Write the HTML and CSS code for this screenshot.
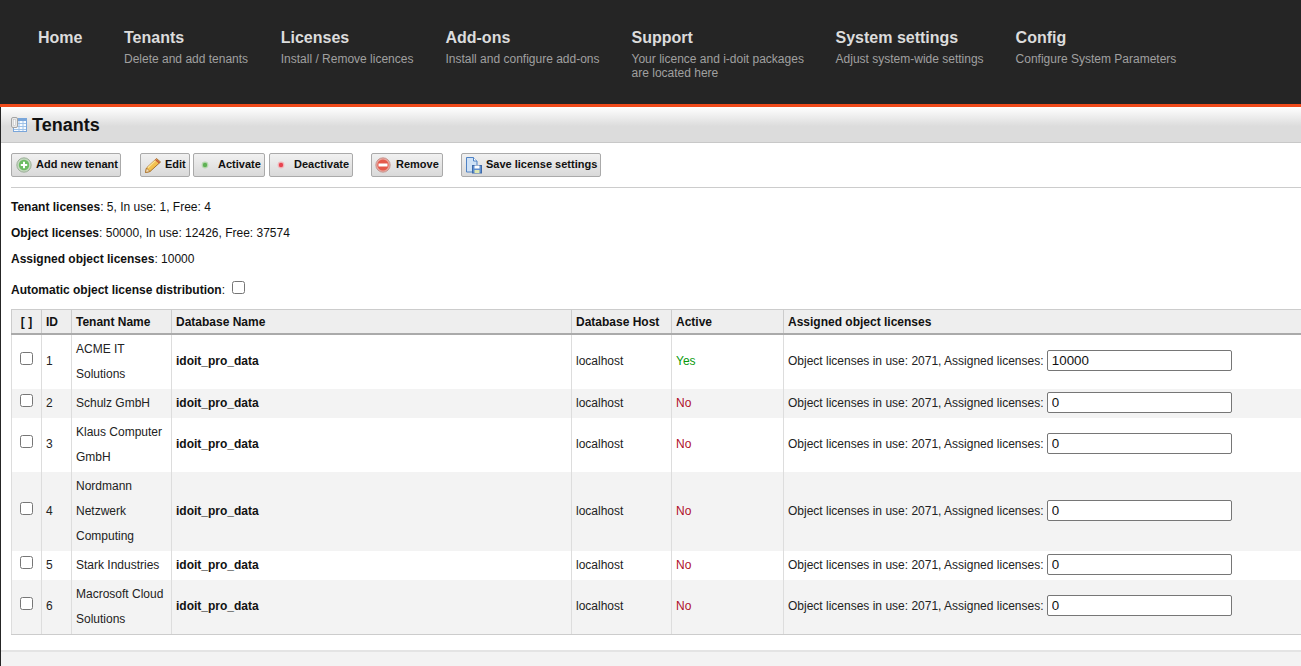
FILE: index.html
```html
<!DOCTYPE html>
<html lang="en">
<head>
<meta charset="utf-8">
<title>Tenants</title>
<link rel="stylesheet" href="styles.css">
</head>
<body>
<header class="topnav">
  <div class="nav-item nav-home"><div class="nav-title">Home</div></div>
  <div class="nav-item nav-tenants"><div class="nav-title">Tenants</div><div class="nav-sub">Delete and add tenants</div></div>
  <div class="nav-item"><div class="nav-title">Licenses</div><div class="nav-sub">Install / Remove licences</div></div>
  <div class="nav-item"><div class="nav-title">Add-ons</div><div class="nav-sub">Install and configure add-ons</div></div>
  <div class="nav-item nav-support"><div class="nav-title">Support</div><div class="nav-sub">Your licence and i-doit packages<br>are located here</div></div>
  <div class="nav-item"><div class="nav-title">System settings</div><div class="nav-sub">Adjust system-wide settings</div></div>
  <div class="nav-item"><div class="nav-title">Config</div><div class="nav-sub">Configure System Parameters</div></div>
</header>
<main class="content">
  <div class="page-title">
    <svg class="title-icon" width="16" height="16" viewBox="0 0 16 16">
      <rect x="2.500" y="1.500" width="13" height="13" fill="#f7fbff" stroke="#7aa6da"/>
      <rect x="3" y="2" width="12" height="2" fill="#7aa6da"/>
      <path d="M3 6.500h12M3 9.500h12M3 12.500h12M8 4v10M12 4v10" stroke="#9fc2e8" fill="none"/>
      <rect x="0.500" y="0.500" width="6" height="10" rx="1.500" fill="#e9e9e9" stroke="#a4a4a4"/>
      <rect x="2.500" y="2.500" width="2" height="6" fill="#fafafa" stroke="#bdbdbd" stroke-width=".5"/>
    </svg>
    <h1>Tenants</h1>
  </div>
  <div class="toolbar">
    <button class="btn btn-add">
      <svg width="16" height="16" viewBox="0 0 16 16"><circle cx="8" cy="8" r="7.200" fill="#c4d8bf" stroke="#8fa58b" stroke-width=".8"/><circle cx="8" cy="8" r="5.200" fill="#6cbc62"/><path d="M8 4.800v6.400M4.800 8h6.400" stroke="#fff" stroke-width="2"/></svg>
      Add new tenant
    </button>
    <div class="btn-group">
      <button class="btn btn-edit">
        <svg width="18" height="17" viewBox="0 0 18 17"><path d="M1.500 15.500l1-4.500L12.500 1.500l4 3.500L6 14.500z" fill="#f3c04f" stroke="#a8702a"/><path d="M1.500 15.500l1-4.500 3.500 3.500z" fill="#f6dfb6" stroke="#a8702a" stroke-width=".7"/><path d="M3.800 10.800l9-8.600" stroke="#fbe49a" stroke-width="1.200"/><path d="M11.500 2.500l4 3.500" stroke="#c0563a" stroke-width="1.600"/></svg>
        Edit
      </button>
      <button class="btn btn-dot btn-act">
        <svg width="8" height="8" viewBox="0 0 8 8"><circle cx="4" cy="4" r="3.400" fill="#b7d9b0"/><circle cx="4" cy="4" r="2.200" fill="#5fb255"/></svg>
        Activate
      </button>
      <button class="btn btn-dot btn-deact">
        <svg width="8" height="8" viewBox="0 0 8 8"><circle cx="4" cy="4" r="3.400" fill="#f0b8bc"/><circle cx="4" cy="4" r="2.200" fill="#e84450"/></svg>
        Deactivate
      </button>
    </div>
    <button class="btn btn-remove">
      <svg width="16" height="16" viewBox="0 0 16 16"><circle cx="8" cy="8" r="7.200" fill="#e9a79f" stroke="#bf8a84" stroke-width=".8"/><circle cx="8" cy="8" r="5.600" fill="#e5594b"/><rect x="3.500" y="6.500" width="9" height="3" fill="#fff"/></svg>
      Remove
    </button>
    <button class="btn btn-save">
      <svg width="18" height="18" viewBox="0 0 18 18"><path d="M1.500 1.500h7l3.500 3.500v11h-10.500z" fill="#cfe2f6" stroke="#4f82c4"/><path d="M8.500 1.500v3.500h3.500" fill="#fff" stroke="#4f82c4"/><rect x="7.500" y="9.500" width="9" height="7.500" fill="#5f8fd0" stroke="#3f6aa8"/><rect x="9.500" y="9.500" width="5" height="3" fill="#fff"/><rect x="9.500" y="14" width="5" height="3" fill="#dfe8b0"/></svg>
      Save license settings
    </button>
  </div>
  <div class="info">
    <p><b>Tenant licenses</b>: 5, In use: 1, Free: 4</p>
    <p><b>Object licenses</b>: 50000, In use: 12426, Free: 37574</p>
    <p><b>Assigned object licenses</b>: 10000</p>
    <p class="auto"><b>Automatic object license distribution</b>: <input type="checkbox" class="auto-check"></p>
  </div>
  <table class="tenants">
    <colgroup>
      <col class="c1"><col class="c2"><col class="c3"><col class="c4"><col class="c5"><col class="c6"><col class="c7">
    </colgroup>
    <thead>
      <tr><th class="center">[ ]</th><th>ID</th><th>Tenant Name</th><th>Database Name</th><th>Database Host</th><th>Active</th><th>Assigned object licenses</th></tr>
    </thead>
    <tbody>
      <tr><td class="center"><input type="checkbox"></td><td>1</td><td>ACME IT Solutions</td><td><b>idoit_pro_data</b></td><td>localhost</td><td class="yes">Yes</td><td>Object licenses in use: 2071, Assigned licenses: <input class="lic" type="text" value="10000"></td></tr>
      <tr class="alt"><td class="center"><input type="checkbox"></td><td>2</td><td>Schulz GmbH</td><td><b>idoit_pro_data</b></td><td>localhost</td><td class="no">No</td><td>Object licenses in use: 2071, Assigned licenses: <input class="lic" type="text" value="0"></td></tr>
      <tr><td class="center"><input type="checkbox"></td><td>3</td><td>Klaus Computer GmbH</td><td><b>idoit_pro_data</b></td><td>localhost</td><td class="no">No</td><td>Object licenses in use: 2071, Assigned licenses: <input class="lic" type="text" value="0"></td></tr>
      <tr class="alt"><td class="center"><input type="checkbox"></td><td>4</td><td>Nordmann Netzwerk Computing</td><td><b>idoit_pro_data</b></td><td>localhost</td><td class="no">No</td><td>Object licenses in use: 2071, Assigned licenses: <input class="lic" type="text" value="0"></td></tr>
      <tr><td class="center"><input type="checkbox"></td><td>5</td><td>Stark Industries</td><td><b>idoit_pro_data</b></td><td>localhost</td><td class="no">No</td><td>Object licenses in use: 2071, Assigned licenses: <input class="lic" type="text" value="0"></td></tr>
      <tr class="alt"><td class="center"><input type="checkbox"></td><td>6</td><td>Macrosoft Cloud Solutions</td><td><b>idoit_pro_data</b></td><td>localhost</td><td class="no">No</td><td>Object licenses in use: 2071, Assigned licenses: <input class="lic" type="text" value="0"></td></tr>
    </tbody>
  </table>
  <div class="foot"></div>
</main>
</body>
</html>
```
FILE: styles.css
```css
* { box-sizing: border-box; }
html, body { margin: 0; padding: 0; height: 666px; overflow: hidden; }
body { font-family: "Liberation Sans", Arial, sans-serif; font-size: 12px; color: #111; background: #fff; }

.topnav { height: 107px; background: #252525; border-bottom: 3px solid #f04a1a; display: flex; gap: 32px; padding: 28px 0 0 38px; }
.nav-home { width: 54px; }
.nav-tenants { margin-right: 0.6px; }
.nav-support { width: 172px; white-space: nowrap; }
.nav-title { font-size: 16px; font-weight: bold; color: #dcdcdc; line-height: 19px; }
.nav-sub { font-size: 12px; color: #a0a0a0; line-height: 14px; margin-top: 5px; }

.content { border-left: 1px solid #252525; height: 559px; overflow: hidden; }

.page-title { height: 36px; display: flex; align-items: center; padding: 1px 0 0 10px; gap: 5px; background: linear-gradient(#fff, #dcdcdc 55%); border-bottom: 1px solid #c8c8c8; }
.page-title h1 { margin: 0; font-size: 18px; font-weight: bold; color: #111; }
.title-icon { flex: none; }

.toolbar { height: 45px; margin-left: 10px; display: flex; align-items: flex-start; padding-top: 10px; border-bottom: 1px solid #ccc; }
.btn { height: 24px; display: inline-flex; align-items: center; padding: 0 0 2px 3px; font: bold 11px "Liberation Sans", Arial, sans-serif; color: #111; border: 1px solid #aaa; border-radius: 2px; background: linear-gradient(#f1f1f1, #d9d9d9); }
.btn svg { position: relative; top: 1px; }
.btn-add { width: 110px; padding-left: 4px; gap: 4px; }
.btn-group { display: flex; gap: 3px; margin-left: 19px; }
.btn-edit { width: 50px; gap: 3px; }
.btn-dot { gap: 9px; padding-left: 7px; }
.btn-act { width: 72px; }
.btn-deact { width: 84px; margin-left: 1px; }
.btn-remove { width: 72px; margin-left: 18px; gap: 5px; }
.btn-save { width: 140px; margin-left: 18px; gap: 3px; }

.info { margin-left: 10px; }
.info p { margin: 0; height: 26px; line-height: 26px; }
.info p:first-child { margin-top: 6px; }
.info .auto { height: 37px; padding-top: 5px; display: block; }
.auto-check { margin: 0 0 0 4px; width: 13px; height: 13px; vertical-align: 0; }

.tenants { margin-left: 10px; width: 1310px; table-layout: fixed; border-collapse: collapse; border-left: 1px solid #ccc; }
.c1 { width: 30px; } .c2 { width: 30px; } .c3 { width: 100px; } .c4 { width: 400px; } .c5 { width: 100px; } .c6 { width: 112px; }
.tenants th { height: 24px; padding: 2px 4px 0; text-align: left; font-weight: bold; background: #eee; border: 1px solid #ccc; border-bottom: 2px solid #aaa; }
.tenants td { padding: 2px 4px; line-height: 25px; border-left: 1px solid #ddd; border-right: 1px solid #ddd; color: #222; }
.tenants tbody tr:last-child td { border-bottom: 1px solid #ccc; }
.tenants b { color: #111; }
.tenants .center { text-align: center; padding-left: 0; padding-right: 0; }
.tenants td.center input { margin: 0; width: 13px; height: 13px; }
.alt td { background: #f3f3f3; }
.tenants td.yes { color: #0a9a0a; }
.tenants td.no { color: #b0102a; }
.lic { width: 185px; height: 21px; padding: 1px 4px; font: 13.33px "Liberation Sans", Arial, sans-serif; color: #111; border: 1px solid #767676; border-radius: 2px; background: #fff; vertical-align: baseline; }

.foot { margin-top: 15px; height: 40px; background: #f3f3f3; border-top: 2px solid #e4e4e4; }
```
